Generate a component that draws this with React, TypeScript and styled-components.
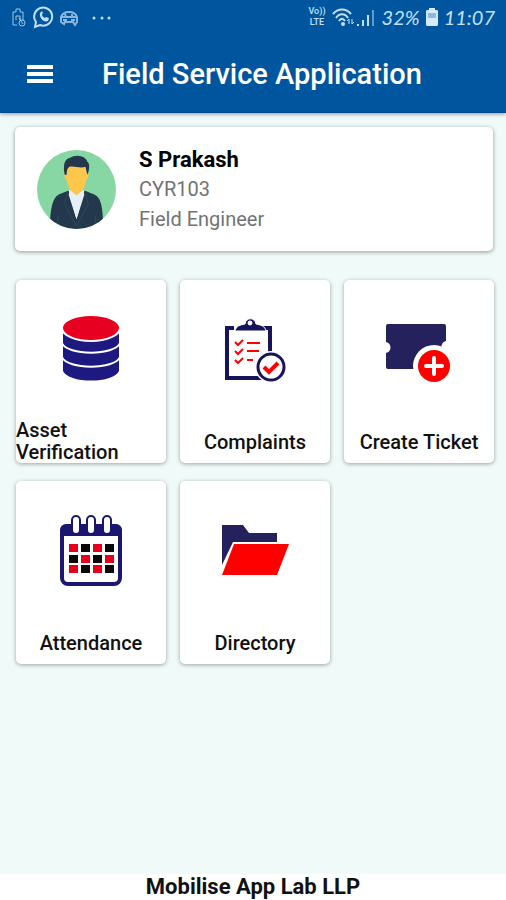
import React from "react";
import styled, { createGlobalStyle } from "styled-components";

const GlobalStyle = createGlobalStyle`
  * { box-sizing: border-box; }
  body { margin: 0; background: #effaf9; font-family: Roboto, "Noto Sans", sans-serif; color: #111; }
  h1, h2, p { margin: 0; }
`;

const Page = styled.div`
  min-height: 100vh;
  display: flex;
  flex-direction: column;
`;

const Top = styled.header`
  background: #00569e;
  color: #fff;
  border-bottom: 1px solid #044a8c;
  box-shadow: 0 1px 4px rgba(0, 0, 0, 0.4);
`;

const StatusBar = styled.div`
  height: 36px;
  padding: 0 11px 2px;
  display: flex;
  align-items: center;
  justify-content: space-between;
  color: #c3e0f8;
`;

const StatusGroup = styled.div`
  display: flex;
  align-items: center;
  gap: 6px;
`;

const Volte = styled.span`
  display: flex;
  flex-direction: column;
  font-size: 9px;
  line-height: 11px;
  font-weight: 500;
  text-align: center;
`;

const StatusText = styled.span`
  font-family: Lato, sans-serif;
  font-size: 20px;
  font-style: italic;
  line-height: 24px;
`;

const AppBar = styled.div`
  display: flex;
  align-items: center;
  height: 76px;
  padding: 0 24px;
  gap: 46px;
`;

const MenuButton = styled.button`
  display: flex;
  padding: 2px;
  border: 0;
  background: none;
  color: inherit;
  cursor: pointer;
`;

const Title = styled.h1`
  font-size: 29px;
  line-height: 36px;
  font-weight: 500;
  white-space: nowrap;
`;

const Main = styled.main`
  flex: 1;
  padding: 14px 12px 20px 15px;
  display: flex;
  flex-direction: column;
  gap: 29px;
`;

const Profile = styled.section`
  display: flex;
  align-items: center;
  gap: 23px;
  margin-right: 1px;
  padding: 17px 22px;
  background: #fff;
  border-radius: 5px;
  box-shadow: 0 1px 4px rgba(0, 0, 0, 0.4);
`;

const ProfileText = styled.div`
  padding-top: 2px;
`;

const Name = styled.h2`
  font-size: 22px;
  line-height: 28px;
  font-weight: 700;
  color: #000;
`;

const Detail = styled.p`
  font-size: 20px;
  line-height: 30px;
  color: #737373;
`;

const Tiles = styled.nav`
  display: grid;
  grid-template-columns: repeat(3, 1fr);
  gap: 18px 14px;
  padding-left: 1px;
`;

const Tile = styled.a`
  display: flex;
  flex-direction: column;
  min-height: 183px;
  background: #fff;
  border-radius: 5px;
  box-shadow: 0 1px 4px rgba(0, 0, 0, 0.35);
  color: #111;
  text-decoration: none;
`;

const IconArea = styled.span`
  height: 138px;
  display: flex;
  align-items: center;
  justify-content: center;
`;

const TileLabel = styled.span<{ $wrapped?: boolean }>`
  margin-top: auto;
  font-size: 20px;
  line-height: 22px;
  font-weight: 500;
  text-align: ${(p) => (p.$wrapped ? "left" : "center")};
  padding-bottom: ${(p) => (p.$wrapped ? 0 : 10)}px;
`;

const Footer = styled.footer`
  background: #fff;
  font-size: 22px;
  line-height: 26px;
  font-weight: 700;
  text-align: center;
`;

const AssetIcon = () => (
  <svg width="80" height="80" viewBox="0 0 80 80">
    <g fill="#1d1980" stroke="#fff" strokeWidth="2">
      <path d="M11 48h58v14c-5 14-53 14-58 0z" />
      <path d="M11 36h58v12c-5 13-53 13-58 0z" />
      <path d="M11 23h58v11c-5 13-53 13-58 0z" />
    </g>
    <ellipse cx="40" cy="19" rx="29" ry="13" fill="#e80020" stroke="#fff" strokeWidth="2" />
  </svg>
);

const ComplaintsIcon = () => (
  <svg width="80" height="80" viewBox="0 0 80 80" fill="none">
    <path d="M19 19h-7v50h42M48 19h7v30" stroke="#17145e" strokeWidth="4" />
    <path fillRule="evenodd" fill="#17145e" stroke="#fff" d="M20 22c1-5 5-6 10-7 1-7 10-7 11 0 5 1 9 2 10 7zM35 12a2 2 0 1 0 0 4 2 2 0 0 0 0-4z" />
    <path d="M20 33l3 3 5-5M20 42l3 3 5-5M20 51l3 3 5-5M32 34h13M32 42h12M32 51h6" stroke="#f00" strokeWidth="2" />
    <circle cx="56" cy="58" r="16" fill="#fff" />
    <circle cx="56" cy="58" r="13" fill="#fff" stroke="#17145e" strokeWidth="3" />
    <path d="M49 58l5 5 9-9" stroke="#f00" strokeWidth="4" />
  </svg>
);

const TicketIcon = () => (
  <svg width="80" height="80" viewBox="0 0 80 80">
    <path fill="#25215c" d="M9 15h56a2 2 0 0 1 2 2v15c-4 1-6 5-3 9v19H9a2 2 0 0 1-2-2V44c6-1 6-10 0-11V17a2 2 0 0 1 2-2z" />
    <circle cx="55" cy="57" r="21" fill="#fff" />
    <circle cx="55" cy="57" r="16" fill="#f00" />
    <path d="M47 57h16M55 49v16" stroke="#fff" strokeWidth="4" strokeLinecap="round" />
  </svg>
);

const cellColumns = [18, 30, 42, 54];
const cellRows = [34, 45, 55];

const AttendanceIcon = () => (
  <svg width="80" height="80" viewBox="0 0 80 80" fill="none">
    <rect x="11" y="16" width="58" height="58" rx="6" stroke="#1b1770" strokeWidth="4" />
    <path d="M9 26v-6a6 6 0 0 1 6-6h50a6 6 0 0 1 6 6v6z" fill="#1b1770" />
    {[25, 40, 56].map((x) => (
      <rect key={x} x={x - 4} y="6" width="8" height="18" rx="4" fill="#fff" stroke="#1b1770" strokeWidth="2" />
    ))}
    {cellRows.map((y, row) =>
      cellColumns.map((x, col) => (
        <rect key={`${x}-${y}`} x={x} y={y} width="9" height="8" fill={(row + col) % 2 ? "#080808" : "#e5001b"} />
      ))
    )}
  </svg>
);

const DirectoryIcon = () => (
  <svg width="80" height="80" viewBox="0 0 80 80">
    <path fill="#25215c" d="M7 15h21l6 8h28v9H18L7 55z" />
    <path fill="#f00" d="M19 34h55L62 65H7z" />
  </svg>
);

const Avatar = () => (
  <svg width="79" height="79" viewBox="0 0 80 80" role="img" aria-label="S Prakash">
    <clipPath id="avatar-round"><circle cx="40" cy="40" r="40" /></clipPath>
    <g clipPath="url(#avatar-round)">
      <path fill="#86d7a3" d="M0 0h80v80H0z" />
      <path fill="#fff" d="M31 41h18l1 38H30z" />
      <path fill="#fdc74c" d="M34 34h12v8l-6 7-6-7z" />
      <path fill="#24384d" d="M32 41l8 29 8-29 10 4c7 3 9 13 9 36H13c0-22 3-33 9-36z" />
      <path fill="#e8eef6" d="M34 41l6 5 6-5 2 4-8 25-8-25z" />
      <path fill="none" stroke="#34485c" d="M21 66v14M59 66v14M31 43l-3 12 12 22 12-22-3-12" />
      <path fill="#fdc74c" d="M30 14h20v9c3-1 3 6 0 7-1 7-5 14-10 14s-9-7-10-14c-3-1-3-8 0-7z" />
      <path fill="#24384d" d="M28 25c-2-10 0-16 5-17 8-5 17-1 18 4 3 2 2 9 0 13l-2-8c-5 2-11-1-16 0-2 1-3 4-3 8z" />
    </g>
  </svg>
);

const MenuIcon = () => (
  <svg width="28" height="22" viewBox="0 0 28 22">
    <path d="M1 4h26M1 11h26M1 18h26" stroke="currentColor" strokeWidth="4" />
  </svg>
);

const NotificationIcons = () => (
  <svg width="104" height="24" viewBox="0 0 104 24" fill="none" stroke="currentColor" strokeWidth="1">
    <path d="M6 20H2V7h3V4h4v3h3v8M5 15v-4h4v4M8 13l4 6" opacity=".8" />
    <circle cx="11" cy="18" r="3" opacity=".8" />
    <path d="M24 22l1-5a9 9 0 1 1 4 3z" strokeWidth="2" />
    <path d="M29 8c-1 5 4 10 8 8l1-3-3-1-1 1c-2-1-3-2-3-4l1-1-1-2z" fill="currentColor" stroke="none" />
    <path d="M50 12c1-3 3-5 8-5s7 2 8 5v5l-2 3-2-3h-8l-1 2-3-2zM50 12h16M54 9l1 3M61 9v3M52 15h4M60 15h4" strokeWidth="2" opacity=".7" />
    <g fill="currentColor" stroke="none">
      <circle cx="83" cy="13" r="1.5" />
      <circle cx="91" cy="13" r="1.5" />
      <circle cx="98" cy="13" r="1.5" />
    </g>
  </svg>
);

const SignalIcons = () => (
  <svg width="44" height="22" viewBox="0 0 44 22" fill="none" stroke="currentColor" strokeWidth="2">
    <path d="M1 8c5-6 13-6 18 0M4 12c3-5 9-5 12 0M7 15c2-3 4-3 6 0" />
    <circle cx="11" cy="18" r="2" fill="currentColor" stroke="none" />
    <path d="M17 18v-5l-2 2M20 13v5l2-2" strokeWidth="1" />
    <path d="M26 20v-2M31 20v-6M36 20V9" />
    <path d="M41 20V4" opacity=".5" />
  </svg>
);

const BatteryIcon = () => (
  <svg width="12" height="18" viewBox="0 0 12 18">
    <path d="M3 0h6v2h2l1 1v14l-1 1H1l-1-1V3l1-1h2z" fill="#d6eaff" />
    <path d="M2 5h8v5H2z" fill="#8db9df" />
  </svg>
);

const tiles = [
  { label: "Asset Verification", Icon: AssetIcon, wrapped: true },
  { label: "Complaints", Icon: ComplaintsIcon },
  { label: "Create Ticket", Icon: TicketIcon },
  { label: "Attendance", Icon: AttendanceIcon },
  { label: "Directory", Icon: DirectoryIcon },
];

export default function App() {
  return (
    <Page>
      <GlobalStyle />
      <Top>
        <StatusBar>
          <NotificationIcons />
          <StatusGroup>
            <Volte><span>Vo))</span><span>LTE</span></Volte>
            <SignalIcons />
            <StatusText>32%</StatusText>
            <BatteryIcon />
            <StatusText>11:07</StatusText>
          </StatusGroup>
        </StatusBar>
        <AppBar>
          <MenuButton type="button" aria-label="Open menu"><MenuIcon /></MenuButton>
          <Title>Field Service Application</Title>
        </AppBar>
      </Top>
      <Main>
        <Profile>
          <Avatar />
          <ProfileText>
            <Name>S Prakash</Name>
            <Detail>CYR103</Detail>
            <Detail>Field Engineer</Detail>
          </ProfileText>
        </Profile>
        <Tiles>
          {tiles.map(({ label, Icon, wrapped }) => (
            <Tile href="#" key={label}>
              <IconArea><Icon /></IconArea>
              <TileLabel $wrapped={wrapped}>{label}</TileLabel>
            </Tile>
          ))}
        </Tiles>
      </Main>
      <Footer>Mobilise App Lab LLP</Footer>
    </Page>
  );
}
